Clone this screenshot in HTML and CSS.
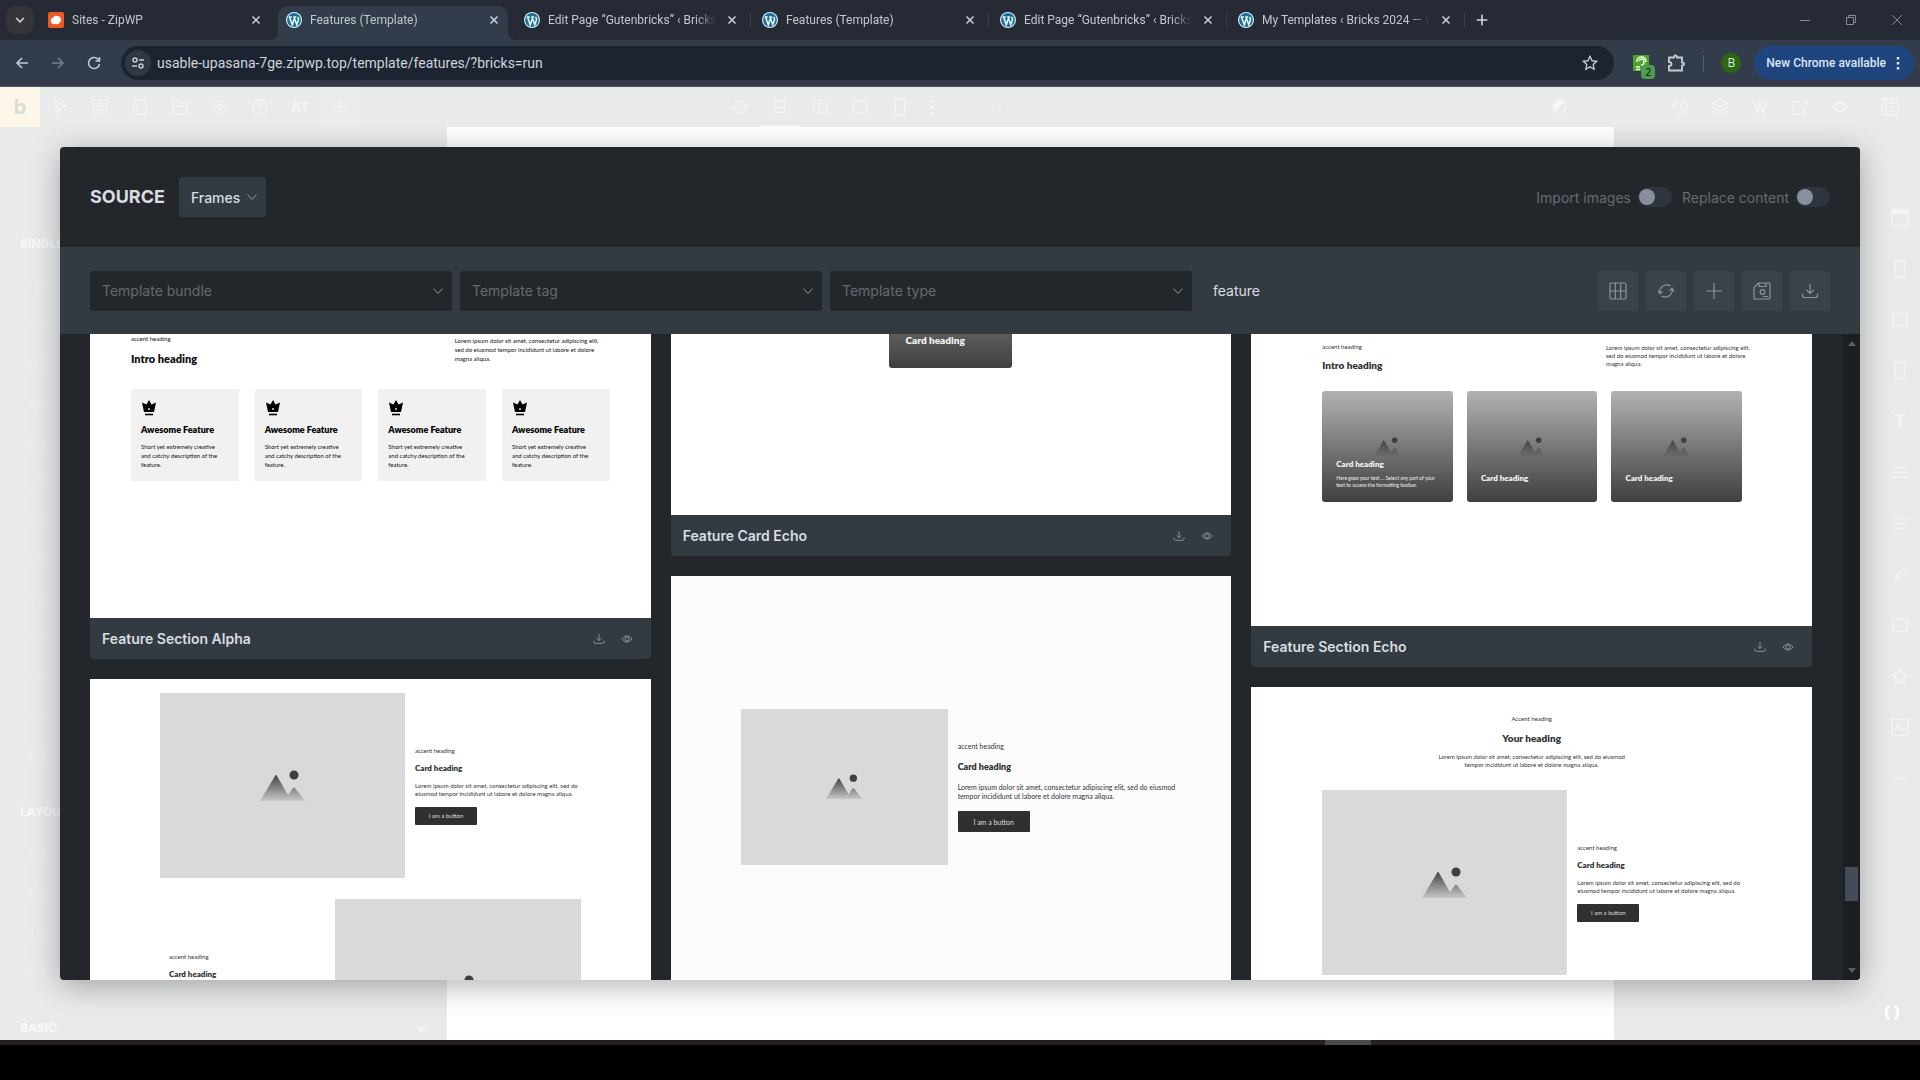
FILE: index.html
```html
<!DOCTYPE html>
<html lang="en">
<head>
<meta charset="utf-8">
<title>Features (Template)</title>
<link rel="stylesheet" href="styles.css">
</head>
<body>
<svg class="sprite" aria-hidden="true">
  <linearGradient id="slope" x1="0" y1="0" x2="0" y2="1"><stop offset="0" stop-color="#444"/><stop offset="1" stop-color="#444" stop-opacity=".12"/></linearGradient>
  <symbol id="wp" viewBox="0 0 16 16"><circle cx="8" cy="8" r="8" fill="#d9edf5"/><circle cx="8" cy="8" r="6.9" fill="#1b7299"/><path d="M2.7 5.1h3M3.6 5.2l2.7 7.6 1.8-5.6M7.2 5.1h3M8.1 5.2l2.7 7.6 1.7-5.2c.3-1.2-.6-1.8-.8-2.8" fill="none" stroke="#e8f5fa" stroke-width="1.5"/></symbol>
  <symbol id="x" viewBox="0 0 10 10"><path d="M1.5 1.5l7 7M8.5 1.5l-7 7"/></symbol>
  <symbol id="chev" viewBox="0 0 12 12"><path d="M1.500 3.500l4.500 5 4.500-5"/></symbol>
  <symbol id="mount" viewBox="0 0 46 32"><path d="M0 31L15 6q1-2 2 0l11 19 5-7q1-1 2 0l10 13z" fill="url(#slope)"/><circle cx="34" cy="5" r="4.500" fill="#3e3e3e"/></symbol>
  <symbol id="crown" viewBox="0 0 14 16"><path d="M7 0l2.500 4.500L14 2.500l-2 9.500H2L0 2.500l4.500 2z"/><path d="M3 14.500h8" stroke="#000" stroke-width="1.600"/><circle cx="7" cy="9" r="1" fill="#ddd"/></symbol>
  <symbol id="dl" viewBox="0 0 18 18"><path d="M9 2v9M5.500 8L9 11.500 12.500 8M1.500 11.500v2q0 2 2 2h11q2 0 2-2v-2"/></symbol>
  <symbol id="eye" viewBox="0 0 18 18"><path d="M1.500 9Q9-.5 16.500 9 9 18.500 1.500 9z"/><circle cx="9" cy="9" r="3.200"/></symbol>
  <symbol id="table" viewBox="0 0 18 18"><rect x="1" y="1" width="16" height="16" rx="1.500"/><path d="M1 9h16M6.300 1v16M11.700 1v16"/></symbol>
  <symbol id="sync" viewBox="0 0 18 18"><path d="M3 11.500A7 7 0 0 1 13.500 4M15 6.500A7 7 0 0 1 4.500 14M1 8.500l1.800 3L5.500 9.500M17 9.500l-1.800-3-2.700 2"/></symbol>
  <symbol id="plus" viewBox="0 0 18 18"><path d="M9 1v16M1 9h16"/></symbol>
  <symbol id="save" viewBox="0 0 18 18"><path d="M5.500 1H16q1 0 1 1v14q0 1-1 1H2q-1 0-1-1V5.500zM6 1v3.500h7V1M10 14.500h5"/><circle cx="9.500" cy="10" r="2.300"/></symbol>
  <symbol id="cursor" viewBox="0 0 18 18"><path d="M3 2l12 6-5 2-3 5z"/></symbol>
  <symbol id="shield" viewBox="0 0 18 18"><path d="M2 2h14l-1.500 12L9 16.500 3.500 14zM12 5.500H6.500v3h5v3L9 12.500l-2.500-1"/></symbol>
  <symbol id="doc" viewBox="0 0 18 18"><path d="M3 2h9q3 0 3 3v11H6q-3 0-3-3zM6 2v9"/></symbol>
  <symbol id="folder" viewBox="0 0 18 18"><path d="M2 3h5l2 2h7v11H2zM2 8h14"/></symbol>
  <symbol id="gear" viewBox="0 0 18 18"><circle cx="9" cy="9" r="6.500" stroke-dasharray="3 1.500"/><circle cx="9" cy="9" r="2.500"/></symbol>
  <symbol id="help" viewBox="0 0 18 18"><circle cx="9" cy="9" r="7"/><path d="M7 7q0-2 2-2t2 2-2 3v1"/></symbol>
  <symbol id="laptop" viewBox="0 0 18 18"><path d="M4 3h10v8H4zM4 11l-2 5h14l-2-5"/></symbol>
  <symbol id="tablet" viewBox="0 0 18 18"><path d="M3 2h8v4M8 6h8v9H8zM3 2v12h5"/></symbol>
  <symbol id="box" viewBox="0 0 18 18"><rect x="2" y="3" width="14" height="12" rx="1"/></symbol>
  <symbol id="phone" viewBox="0 0 18 18"><rect x="4" y="1" width="10" height="16" rx="1"/></symbol>
  <symbol id="dots" viewBox="0 0 18 18"><path d="M9 2v3M9 8v3M9 14v3" stroke-width="3"/></symbol>
  <symbol id="code" viewBox="0 0 18 18"><path d="M5 5L1 9l4 4M13 5l4 4-4 4M10 4L8 14"/></symbol>
  <symbol id="contrast" viewBox="0 0 18 18"><circle cx="9" cy="9" r="6"/><path d="M4 13A6 6 0 0 1 13 4z" fill="#f6f7f6"/></symbol>
  <symbol id="history" viewBox="0 0 18 18"><path d="M3 9a6.500 6.500 0 1 1 2 5M1 7l2 2 2.500-2M9.500 5v4.500H13"/></symbol>
  <symbol id="layers" viewBox="0 0 18 18"><path d="M9 1l8 4-8 4-8-4zM1 9l8 4 8-4M1 13l8 4 8-4"/></symbol>
  <symbol id="wpline" viewBox="0 0 18 18"><path d="M1 4h4M3 4l3.500 10L9 6l3 8 3-8q.5-2-1-3.500M8 4h4" stroke-width="2"/></symbol>
  <symbol id="ext" viewBox="0 0 18 18"><path d="M9 4H2v12h12V9M6 12L16 2M11 2h5v5"/></symbol>
  <symbol id="panel" viewBox="0 0 18 18"><rect x="1" y="1" width="16" height="16"/><path d="M5 1v16M8 5h6M8 9h6M8 13h6"/></symbol>
  <symbol id="frame" viewBox="0 0 18 18"><rect x="1" y="1" width="16" height="16"/><path d="M2 4h14" stroke-width="4"/></symbol>
  <symbol id="picture" viewBox="0 0 18 18"><rect x="1" y="1" width="16" height="16"/><path d="M4 12l3-6 4 6 3-3"/></symbol>
  <symbol id="lines" viewBox="0 0 18 18"><path d="M1 4h16M1 9h16M1 14h16"/></symbol>
  <symbol id="tee" viewBox="0 0 18 18"><path d="M3 3h12M9 3v13" stroke-width="2.500"/></symbol>
  <symbol id="pen" viewBox="0 0 18 18"><path d="M4 15l2-6 7-7 3 3-7 7zM6 9l3 3"/></symbol>
  <symbol id="star" viewBox="0 0 18 18"><path d="M9 1.500l2.300 5 5.200.6-3.900 3.600 1.100 5.300L9 13.300 4.300 16l1.100-5.300L1.500 7.100l5.200-.6z"/></symbol>
  <symbol id="minus" viewBox="0 0 18 18"><path d="M1 9h16"/></symbol>
  <symbol id="parens" viewBox="0 0 18 18"><path d="M6 2Q0 9 6 16M12 2q6 7 0 14" stroke-width="2.500"/></symbol>
</svg>

<header class="tabs">
  <button class="tab-search" aria-label="Search tabs"><svg class="i10"><use href="#chev"/></svg></button>
  <div class="tab"><svg class="i16" viewBox="0 0 16 16"><rect width="16" height="16" rx="2" fill="#ee5a24" stroke="none"/><path d="M3 9q-1-3 2-3 1-3 4-2 4 0 4 4-1 5-6 4-4 1-4-3z" fill="#fff" stroke="none"/></svg><span class="tab-name">Sites - ZipWP</span><button class="tab-x" aria-label="Close tab"><svg class="i10"><use href="#x"/></svg></button></div>
  <div class="tab active"><svg class="i16"><use href="#wp"/></svg><span class="tab-name">Features (Template)</span><button class="tab-x" aria-label="Close tab"><svg class="i10"><use href="#x"/></svg></button></div>
  <div class="tab sep"><svg class="i16"><use href="#wp"/></svg><span class="tab-name">Edit Page “Gutenbricks” ‹ Bricks</span><button class="tab-x" aria-label="Close tab"><svg class="i10"><use href="#x"/></svg></button></div>
  <div class="tab sep"><svg class="i16"><use href="#wp"/></svg><span class="tab-name">Features (Template)</span><button class="tab-x" aria-label="Close tab"><svg class="i10"><use href="#x"/></svg></button></div>
  <div class="tab sep"><svg class="i16"><use href="#wp"/></svg><span class="tab-name">Edit Page “Gutenbricks” ‹ Bricks</span><button class="tab-x" aria-label="Close tab"><svg class="i10"><use href="#x"/></svg></button></div>
  <div class="tab sep"><svg class="i16"><use href="#wp"/></svg><span class="tab-name">My Templates ‹ Bricks 2024 — W</span><button class="tab-x" aria-label="Close tab"><svg class="i10"><use href="#x"/></svg></button></div>
  <button class="new-tab" aria-label="New tab"><svg class="i12"><use href="#plus"/></svg></button>
  <div class="win">
    <button aria-label="Minimise"><svg class="i10" viewBox="0 0 10 10"><path d="M0 5.500h10"/></svg></button>
    <button aria-label="Restore"><svg class="i10" viewBox="0 0 10 10"><path d="M.5 2.500h7v7h-7zM2.500 2.500v-2h7v7h-2"/></svg></button>
    <button aria-label="Close window"><svg class="i10" viewBox="0 0 10 10"><path d="M0 0l10 10M10 0L0 10"/></svg></button>
  </div>
</header>

<nav class="bar">
  <button class="nav-btn" aria-label="Back"><svg class="i14" viewBox="0 0 14 14"><path d="M13 7H2M7 2L2 7l5 5"/></svg></button>
  <button class="nav-btn dim" aria-label="Forward"><svg class="i14" viewBox="0 0 14 14"><path d="M1 7h11M7 2l5 5-5 5"/></svg></button>
  <button class="nav-btn" aria-label="Reload"><svg class="i14" viewBox="0 0 14 14"><path d="M12.500 8A5.500 5.500 0 1 1 11 3.200L12.500 5M12.500 1v4h-4"/></svg></button>
  <div class="omni">
    <button class="tune" aria-label="Site information"><svg class="i14" viewBox="0 0 14 14"><circle cx="4" cy="4" r="2"/><path d="M8 4h5M1 10h5"/><circle cx="10" cy="10" r="2"/></svg></button>
    <input class="url" type="text" aria-label="Address" value="usable-upasana-7ge.zipwp.top/template/features/?bricks=run">
    <button class="icon-btn" aria-label="Bookmark"><svg class="i16"><use href="#star"/></svg></button>
  </div>
  <div class="ext">
    <button class="icon-btn badge-host" aria-label="Extension"><svg class="i16" viewBox="0 0 16 16"><rect width="16" height="16" fill="#4ea32c" stroke="none"/><path d="M4 7q0-5 4.500-5T13 7M6 6q1-2 3-2t2 3-3 3M3 12h4M3 14.500h4" stroke="#e8ffe0"/></svg><span class="badge">2</span></button>
    <button class="icon-btn" aria-label="Extensions"><svg class="i18" viewBox="0 0 18 18"><path d="M2 3.500h5q0-2 1.500-2t1.500 2h5v5q2 0 2 1.500t-2 1.500v5H2v-4.500q2.500 0 2.500-2T2 8z" stroke-width="1.800"/></svg></button>
  </div>
  <span class="rule"></span>
  <button class="avatar">B</button>
  <button class="update">New Chrome available<svg class="i16" viewBox="0 0 16 16"><path d="M8 2v2.500M8 7v2.500M8 12v2.500" stroke-width="2.500"/></svg></button>
</nav>

<div class="page">
  <div class="builder-bar">
    <div class="tools left"><span class="logo">b</span>
      <svg><use href="#cursor"/></svg><svg><use href="#shield"/></svg><svg><use href="#doc"/></svg><svg><use href="#folder"/></svg><svg><use href="#gear"/></svg><svg><use href="#help"/></svg><span class="at">AT</span><svg class="lit"><use href="#plus"/></svg></div>
    <div class="tools middle"><svg><use href="#sync"/></svg><svg class="on"><use href="#laptop"/></svg><svg><use href="#tablet"/></svg><svg><use href="#box"/></svg><svg><use href="#phone"/></svg><svg class="narrow"><use href="#dots"/></svg><svg class="faint"><use href="#code"/></svg></div>
    <div class="tools right"><svg class="mode"><use href="#contrast"/></svg><svg><use href="#history"/></svg><svg><use href="#layers"/></svg><svg><use href="#wpline"/></svg><svg><use href="#ext"/></svg><svg><use href="#eye"/></svg><svg class="last"><use href="#panel"/></svg></div>
  </div>
  <div class="workspace">
    <aside class="elements">
      <h6>SINGLE</h6>
      <div class="list"><svg><use href="#tee"/></svg><svg><use href="#plus"/></svg><svg><use href="#ext"/></svg><svg><use href="#eye"/></svg><svg><use href="#folder"/></svg><svg><use href="#pen"/></svg><svg><use href="#code"/></svg><svg><use href="#help"/></svg><svg><use href="#star"/></svg><svg><use href="#minus"/></svg><svg><use href="#gear"/></svg><svg><use href="#minus"/></svg><svg><use href="#box"/></svg></div>
      <h6>LAYOUT</h6>
      <div class="list"><svg><use href="#box"/></svg><svg><use href="#layers"/></svg><svg><use href="#phone"/></svg><svg><use href="#box"/></svg></div>
      <h6 class="basic">BASIC<svg class="i12"><use href="#chev"/></svg></h6>
    </aside>
    <main class="canvas"></main>
    <aside class="structure">
      <svg><use href="#frame"/></svg><svg><use href="#phone"/></svg><svg><use href="#box"/></svg><svg><use href="#phone"/></svg><svg><use href="#tee"/></svg><svg><use href="#lines"/></svg><svg><use href="#lines"/></svg><svg><use href="#pen"/></svg><svg><use href="#box"/></svg><svg><use href="#star"/></svg><svg><use href="#picture"/></svg><svg><use href="#minus"/></svg>
      <svg class="braces"><use href="#parens"/></svg>
    </aside>
  </div>

  <section class="modal" role="dialog" aria-label="Templates">
    <div class="modal-head">
      <h2>SOURCE</h2>
      <button class="frames">Frames<svg class="i12"><use href="#chev"/></svg></button>
      <div class="switches">
        <label for="imp">Import images</label><input id="imp" type="checkbox">
        <label for="rep">Replace content</label><input id="rep" type="checkbox">
      </div>
    </div>
    <div class="filters">
      <div class="pick"><select aria-label="Template bundle"><option>Template bundle</option></select><svg class="i12"><use href="#chev"/></svg></div>
      <div class="pick"><select aria-label="Template tag"><option>Template tag</option></select><svg class="i12"><use href="#chev"/></svg></div>
      <div class="pick"><select aria-label="Template type"><option>Template type</option></select><svg class="i12"><use href="#chev"/></svg></div>
      <input class="search" type="text" aria-label="Search templates" value="feature">
      <div class="actions">
        <button aria-label="Grid"><svg class="i18"><use href="#table"/></svg></button>
        <button aria-label="Reload"><svg class="i18"><use href="#sync"/></svg></button>
        <button aria-label="Add"><svg class="i18"><use href="#plus"/></svg></button>
        <button aria-label="Save"><svg class="i18"><use href="#save"/></svg></button>
        <button aria-label="Import"><svg class="i18"><use href="#dl"/></svg></button>
      </div>
    </div>
    <div class="results">
      <div class="columns">
        <div class="column">
          <article class="tile">
            <div class="preview alpha">
              <div class="intro">
                <div><p class="accent">accent heading</p><h4>Intro heading</h4></div>
                <p class="copy">Lorem ipsum dolor sit amet, consectetur adipiscing elit,<br>sed do eiusmod tempor incididunt ut labore et dolore<br>magna aliqua.</p>
              </div>
              <div class="features">
                <div class="feature"><svg><use href="#crown"/></svg><h5>Awesome Feature</h5><p>Short yet extremely creative<br>and catchy description of the<br>feature.</p></div>
                <div class="feature"><svg><use href="#crown"/></svg><h5>Awesome Feature</h5><p>Short yet extremely creative<br>and catchy description of the<br>feature.</p></div>
                <div class="feature"><svg><use href="#crown"/></svg><h5>Awesome Feature</h5><p>Short yet extremely creative<br>and catchy description of the<br>feature.</p></div>
                <div class="feature"><svg><use href="#crown"/></svg><h5>Awesome Feature</h5><p>Short yet extremely creative<br>and catchy description of the<br>feature.</p></div>
              </div>
            </div>
            <footer><h3>Feature Section Alpha</h3><button aria-label="Insert"><svg class="i12"><use href="#dl"/></svg></button><button aria-label="Preview"><svg class="i12"><use href="#eye"/></svg></button></footer>
          </article>
          <article class="tile">
            <div class="preview zigzag">
              <div class="split">
                <div class="media"><svg><use href="#mount"/></svg></div>
                <div class="words"><p class="accent">accent heading</p><h5>Card heading</h5><p class="copy">Lorem ipsum dolor sit amet, consectetur adipiscing elit, sed do<br>eiusmod tempor incididunt ut labore et dolore magna aliqua.</p><button>I am a button</button></div>
              </div>
              <div class="split flip">
                <div class="words"><p class="accent">accent heading</p><h5>Card heading</h5></div>
                <div class="media"><svg><use href="#mount"/></svg></div>
              </div>
            </div>
          </article>
        </div>
        <div class="column">
          <article class="tile">
            <div class="preview single"><div class="stub">Card heading</div></div>
            <footer><h3>Feature Card Echo</h3><button aria-label="Insert"><svg class="i12"><use href="#dl"/></svg></button><button aria-label="Preview"><svg class="i12"><use href="#eye"/></svg></button></footer>
          </article>
          <article class="tile">
            <div class="preview large">
              <div class="split">
                <div class="media"><svg><use href="#mount"/></svg></div>
                <div class="words"><p class="accent">accent heading</p><h5>Card heading</h5><p class="copy">Lorem ipsum dolor sit amet, consectetur adipiscing elit, sed do eiusmod<br>tempor incididunt ut labore et dolore magna aliqua.</p><button>I am a button</button></div>
              </div>
            </div>
          </article>
        </div>
        <div class="column">
          <article class="tile">
            <div class="preview echo">
              <div class="intro">
                <div><p class="accent">accent heading</p><h4>Intro heading</h4></div>
                <p class="copy">Lorem ipsum dolor sit amet, consectetur adipiscing elit,<br>sed do eiusmod tempor incididunt ut labore et dolore<br>magna aliqua.</p>
              </div>
              <div class="shades">
                <div class="shade"><svg><use href="#mount"/></svg><h5>Card heading</h5><p>Here goes your text ... Select any part of your<br>text to access the formatting toolbar.</p></div>
                <div class="shade"><svg><use href="#mount"/></svg><h5>Card heading</h5></div>
                <div class="shade"><svg><use href="#mount"/></svg><h5>Card heading</h5></div>
              </div>
            </div>
            <footer><h3>Feature Section Echo</h3><button aria-label="Insert"><svg class="i12"><use href="#dl"/></svg></button><button aria-label="Preview"><svg class="i12"><use href="#eye"/></svg></button></footer>
          </article>
          <article class="tile">
            <div class="preview titled">
              <div class="centred"><p class="accent">Accent heading</p><h4>Your heading</h4><p class="copy">Lorem ipsum dolor sit amet, consectetur adipiscing elit, sed do eiusmod<br>tempor incididunt ut labore et dolore magna aliqua.</p></div>
              <div class="split">
                <div class="media"><svg><use href="#mount"/></svg></div>
                <div class="words"><p class="accent">accent heading</p><h5>Card heading</h5><p class="copy">Lorem ipsum dolor sit amet, consectetur adipiscing elit, sed do<br>eiusmod tempor incididunt ut labore et dolore magna aliqua.</p><button>I am a button</button></div>
              </div>
            </div>
          </article>
        </div>
      </div>
      <div class="scrollbar"><i class="up"></i><i class="thumb"></i><i class="down"></i></div>
    </div>
  </section>
</div>
<div class="taskbar"><i></i></div>
</body>
</html>
```
FILE: styles.css
```css
* { box-sizing: border-box; }
html, body { height: 100%; }
body { margin: 0; display: flex; flex-direction: column; overflow: hidden; background: #000; font-family: Inter, sans-serif; }
h2, h3, h4, h5, h6, p { margin: 0; }
button, input, select { font: inherit; color: inherit; border: 0; padding: 0; margin: 0; background: none; outline: 0; }
svg { display: block; flex: none; fill: none; stroke: currentColor; stroke-width: 1.5; }
.sprite { position: absolute; width: 0; height: 0; }
#wp, #mount, #crown { stroke: none; }
#crown { fill: #000; }
.i10 { width: 10px; height: 10px; }
.i12 { width: 12px; height: 12px; }
.i14 { width: 14px; height: 14px; }
.i16 { width: 16px; height: 16px; }
.i18 { width: 18px; height: 18px; }

/* browser tabs */
.tabs { flex: none; height: 40px; display: flex; align-items: center; background: #262a35; color: #c3c8d0; font: 12px Roboto, sans-serif; padding-left: 6px; }
.tab-search { width: 28px; height: 28px; border-radius: 9px; background: #353539; display: grid; place-items: center; margin-right: 6px; }
.tab-search svg { stroke-width: 2; }
.tab { position: relative; width: 238px; height: 34px; align-self: flex-end; display: flex; align-items: center; gap: 8px; padding: 0 14px 6px 8px; }
.tab.active { background: #333c4a; border-radius: 10px 10px 0 0; width: 230px; margin-right: 8px; padding-right: 6px; }
.tab.active::before, .tab.active::after { content: ""; position: absolute; bottom: 0; width: 8px; height: 8px; }
.tab.active::before { left: -8px; background: radial-gradient(circle at 0 0, transparent 8px, #333c4a 8px); }
.tab.active::after { right: -8px; background: radial-gradient(circle at 100% 0, transparent 8px, #333c4a 8px); }
.tab-name { flex: 1; overflow: hidden; white-space: nowrap; mask-image: linear-gradient(90deg, #000 88%, transparent); }
.tab.sep::after { content: ""; position: absolute; right: 3px; top: 7px; width: 1px; height: 14px; background: #3b404c; }
.tab-x { width: 16px; height: 16px; display: grid; place-items: center; }
.tab-x, .new-tab { color: #cdd2da; }
.new-tab { width: 24px; height: 24px; display: grid; place-items: center; margin-left: 2px; }
.new-tab svg { stroke-width: 2.500; }
.win { margin-left: auto; display: flex; color: #868b96; }
.win button { width: 46px; height: 40px; display: grid; place-items: center; }
.win svg { stroke-width: 1; }

/* address bar */
.bar { flex: none; height: 47px; display: flex; align-items: center; background: linear-gradient(#333c4a 80%, #36394d); border-bottom: 1px solid #535862; color: #c7ccd4; padding: 0 6px 0 4px; }
.nav-btn { width: 36px; height: 34px; display: grid; place-items: center; }
.nav-btn.dim { color: #76808e; }
.omni { flex: 1; height: 34px; margin-left: 9px; border-radius: 17px; background: #1c2431; display: flex; align-items: center; padding: 0 14px 0 4px; }
.tune { width: 26px; height: 26px; border-radius: 13px; background: #2f3846; display: grid; place-items: center; margin-right: 6px; }
.url { flex: 1; min-width: 0; height: 30px; font: 14px Roboto, sans-serif; color: #cfd4db; }
.icon-btn { width: 20px; height: 24px; display: grid; place-items: center; }
.ext { display: flex; gap: 15px; padding: 0 17px; }
.badge-host { position: relative; }
.badge { position: absolute; right: -4px; bottom: -4px; width: 14px; height: 14px; border-radius: 4px; background: #4f9c50; color: #14301a; font: 600 10px/14px "Open Sans", sans-serif; }
.rule { width: 1px; height: 16px; background: #566070; }
.avatar { width: 20px; height: 20px; border-radius: 10px; background: #2c6612; color: #dbe8d4; font: 12px/20px "Open Sans", sans-serif; margin: 0 13px 0 17px; text-align: center; }
.update { height: 34px; border-radius: 17px; background: #1f457f; color: #dce6f8; font: 500 12px Roboto, sans-serif; display: flex; align-items: center; gap: 4px; padding: 0 8px 0 12px; }

/* dimmed builder behind the dialog */
.page { position: relative; flex: 1; min-height: 0; display: flex; flex-direction: column; background: #e8ebea; color: #f3f4f3; overflow: hidden; }
.builder-bar { flex: none; height: 40px; display: flex; }
.tools { display: flex; align-items: center; }
.tools.left, .tools.right { flex: 1; }
.tools.right { justify-content: flex-end; }
.tools.middle { width: 480px; }
.tools svg, .tools .at { width: 40px; height: 40px; padding: 11px; }
.tools .at { padding: 0; font: 700 14px/40px "Open Sans", sans-serif; text-align: center; }
.tools .lit { background: #ebedec; }
.tools .on { border-bottom: 2px solid #f8f9f8; }
.tools .narrow { width: 24px; padding: 11px 3px; }
.tools .faint { opacity: .4; margin-left: 36px; }
.tools .mode { margin-right: 80px; }
.tools .last { width: 60px; padding: 11px 21px; }
.logo { width: 40px; height: 40px; background: #fcf7e8; color: #dcdcd2; font: 700 20px/40px Inter, sans-serif; text-align: center; }
.workspace { flex: 1; min-height: 0; display: flex; }
.elements { width: 447px; padding: 109px 20px 0; }
.elements h6 { font: 700 12px/16px Inter, sans-serif; color: #f8f9f8; }
.list { padding: 16px 0 29px 8px; display: flex; flex-direction: column; }
.list svg { width: 18px; height: 39px; padding: 11px 0; opacity: .5; }
.elements .list:nth-of-type(2) { padding-bottom: 28px; }
.elements .basic { display: flex; justify-content: space-between; align-items: center; }
.canvas { flex: 1; background: #fff; }
.structure { width: 306px; padding: 65px 11px 0; display: flex; flex-direction: column; align-items: flex-end; background: #e8e9e9; }
.structure svg { width: 18px; height: 51px; }
.structure .braces { margin: auto 8px 2px 0; color: #fff; }

/* template dialog */
.modal { position: absolute; inset: 60px; display: flex; flex-direction: column; border-radius: 4px; overflow: hidden; background: #23272c; color: #d9dde1; box-shadow: 0 6px 30px rgba(0, 0, 0, .3); }
.modal-head { flex: none; height: 100px; display: flex; align-items: center; padding: 0 30px; }
.modal-head h2 { font: 700 18px/24px Inter, sans-serif; margin-right: 14px; }
.frames { height: 40px; width: 87px; border-radius: 3px; background: #323b42; font-size: 14px; font-weight: 500; display: flex; align-items: center; justify-content: space-between; padding: 0 8px 0 12px; }
.frames svg, .pick svg { stroke-width: 1; color: #9298a0; }
.switches { margin-left: auto; display: flex; align-items: center; font-size: 14px; color: #676b71; }
.switches input { appearance: none; width: 34px; height: 20px; margin: 0 10px 0 7px; border-radius: 10px; background: #2d353e; display: flex; align-items: center; padding: 0 1px; }
.switches input:last-child { margin-right: 0; }
.switches input::before { content: ""; width: 16px; height: 16px; border-radius: 8px; background: #87909c; }
.filters { flex: none; height: 87px; display: flex; align-items: center; gap: 8px; padding: 0 30px; background: #323b41; }
.pick { position: relative; flex: 0 1 362px; }
.pick select { appearance: none; width: 100%; height: 40px; border-radius: 3px; background: #23272c; color: #656a70; font-size: 14px; padding: 0 12px; }
.pick svg { position: absolute; right: 8px; top: 14px; pointer-events: none; }
.search { flex: 1; min-width: 0; height: 40px; padding-left: 13px; font-size: 14px; }
.actions { display: flex; gap: 8px; }
.actions button { width: 40px; height: 40px; border-radius: 3px; background: #3a424a; color: #8c939b; display: grid; place-items: center; }
.actions svg { stroke-width: 1.2; }
.results { flex: 1; min-height: 0; display: flex; }
.columns { flex: 1; min-width: 0; display: grid; grid-template-columns: repeat(3, minmax(0, 1fr)); gap: 20px; padding: 0 31px 0 30px; }
.column { display: flex; flex-direction: column; gap: 20px; }
.tile footer { height: 41px; display: flex; align-items: center; gap: 16px; padding: 0 18px 0 12px; background: #323b41; border-radius: 0 0 4px 4px; }
.tile footer h3 { flex: 1; font: 600 14px/20px Inter, sans-serif; }
.tile footer button { color: #87909a; }
.scrollbar { flex: none; width: 17px; background: #1b1f22; display: flex; flex-direction: column; align-items: center; padding: 7px 0; }
.scrollbar i { border: 4px solid transparent; }
.scrollbar .up { border-top: 0; border-bottom: 5px solid #5b5f63; }
.scrollbar .thumb { border: 0; width: 13px; height: 34px; background: #444c57; margin: auto 0 67px; }
.scrollbar .down { border-bottom: 0; border-top: 5px solid #5b5f63; }

/* template thumbnails */
.preview { background: #fff; color: #333; font: 6px/8px Lato, sans-serif; white-space: nowrap; overflow: hidden; }
.preview h4 { font: 800 10px/14px Lato, sans-serif; }
.preview h5 { font: 800 8px/10px Lato, sans-serif; }
.intro { display: flex; justify-content: space-between; align-items: flex-start; }
.alpha { height: 284px; padding: 0 41px; line-height: 9px; color: #111; }
.preview.alpha h4 { font-size: 11px; line-height: 16px; margin-top: 8px; }
.alpha .copy { width: 155px; margin-top: 2px; }
.features { display: grid; grid-template-columns: repeat(4, minmax(0, 1fr)); gap: 16px; margin-top: 22px; }
.feature { background: #f1f1f1; padding: 11px 10px 12px; }
.feature svg { width: 14px; height: 16px; margin-left: 1px; }
.preview .feature h5 { font-size: 9px; line-height: 12px; margin: 8px 0 6px; color: #000; }
.single { height: 181px; }
.stub { width: 123px; height: 34px; margin: 0 auto; padding-left: 16px; border-radius: 0 0 3px 3px; background: linear-gradient(#5c5c5c, #404040); color: #f2f2f2; font: 800 10px/12px Lato, sans-serif; }
.echo { height: 292px; padding: 9px 70px 0 71px; }
.echo h4 { margin-top: 7px; }
.echo .copy { width: 136px; margin-top: 1px; }
.shades { display: grid; grid-template-columns: repeat(3, minmax(0, 1fr)); gap: 14px; margin-top: 19px; }
.shade { position: relative; height: 111px; border-radius: 3px; background: linear-gradient(#b2b2b2, #3f3f3f); color: #f2f2f2; display: flex; flex-direction: column; justify-content: flex-end; padding: 0 14px 13px; font-size: 5px; line-height: 7px; }
.shade svg { position: absolute; left: 50%; top: 46px; width: 28px; height: 20px; margin-left: -14px; }
.preview .shade h5 { margin-bottom: 6px; }
.zigzag { padding: 14px 70px 0; }
.split { display: grid; grid-template-columns: 245px minmax(0, 1fr); gap: 10px; align-items: center; }
.media { height: 185px; background: #d9d9d9; display: grid; place-items: center; }
.media svg { width: 46px; height: 32px; }
.words h5 { margin: 8px 0 9px; }
.words button { display: block; width: 62px; height: 18px; margin-top: 9px; border-radius: 1px; background: #303030; color: #ddd; font-size: 6px; line-height: 8px; }
.split.flip { grid-template-columns: minmax(0, 1fr) 246px; align-items: start; margin-top: 21px; }
.flip .words { padding: 54px 0 0 9px; }
.flip .media { padding-bottom: 2px; }
.large { min-height: 404px; background: #fcfcfc; padding: 133px 69px 0 70px; font-size: 7px; line-height: 9px; }
.large .split { grid-template-columns: 207px minmax(0, 1fr); }
.large .media { height: 156px; }
.large .media svg { width: 37px; height: 26px; }
.preview.large h5 { font-size: 9px; line-height: 12px; margin: 10px 0; }
.large .words button { width: 72px; height: 21px; margin-top: 10px; font-size: 7px; }
.titled { padding: 28px 71px 5px; }
.centred { text-align: center; margin-bottom: 21px; }
.centred h4 { margin: 8px 0; }

/* strip below the page */
.taskbar { flex: none; height: 40px; border-top: 5px solid #231f22; }
.taskbar i { display: block; width: 46px; height: 5px; margin: -5px 0 0 69%; background: #4a494b; }
```
